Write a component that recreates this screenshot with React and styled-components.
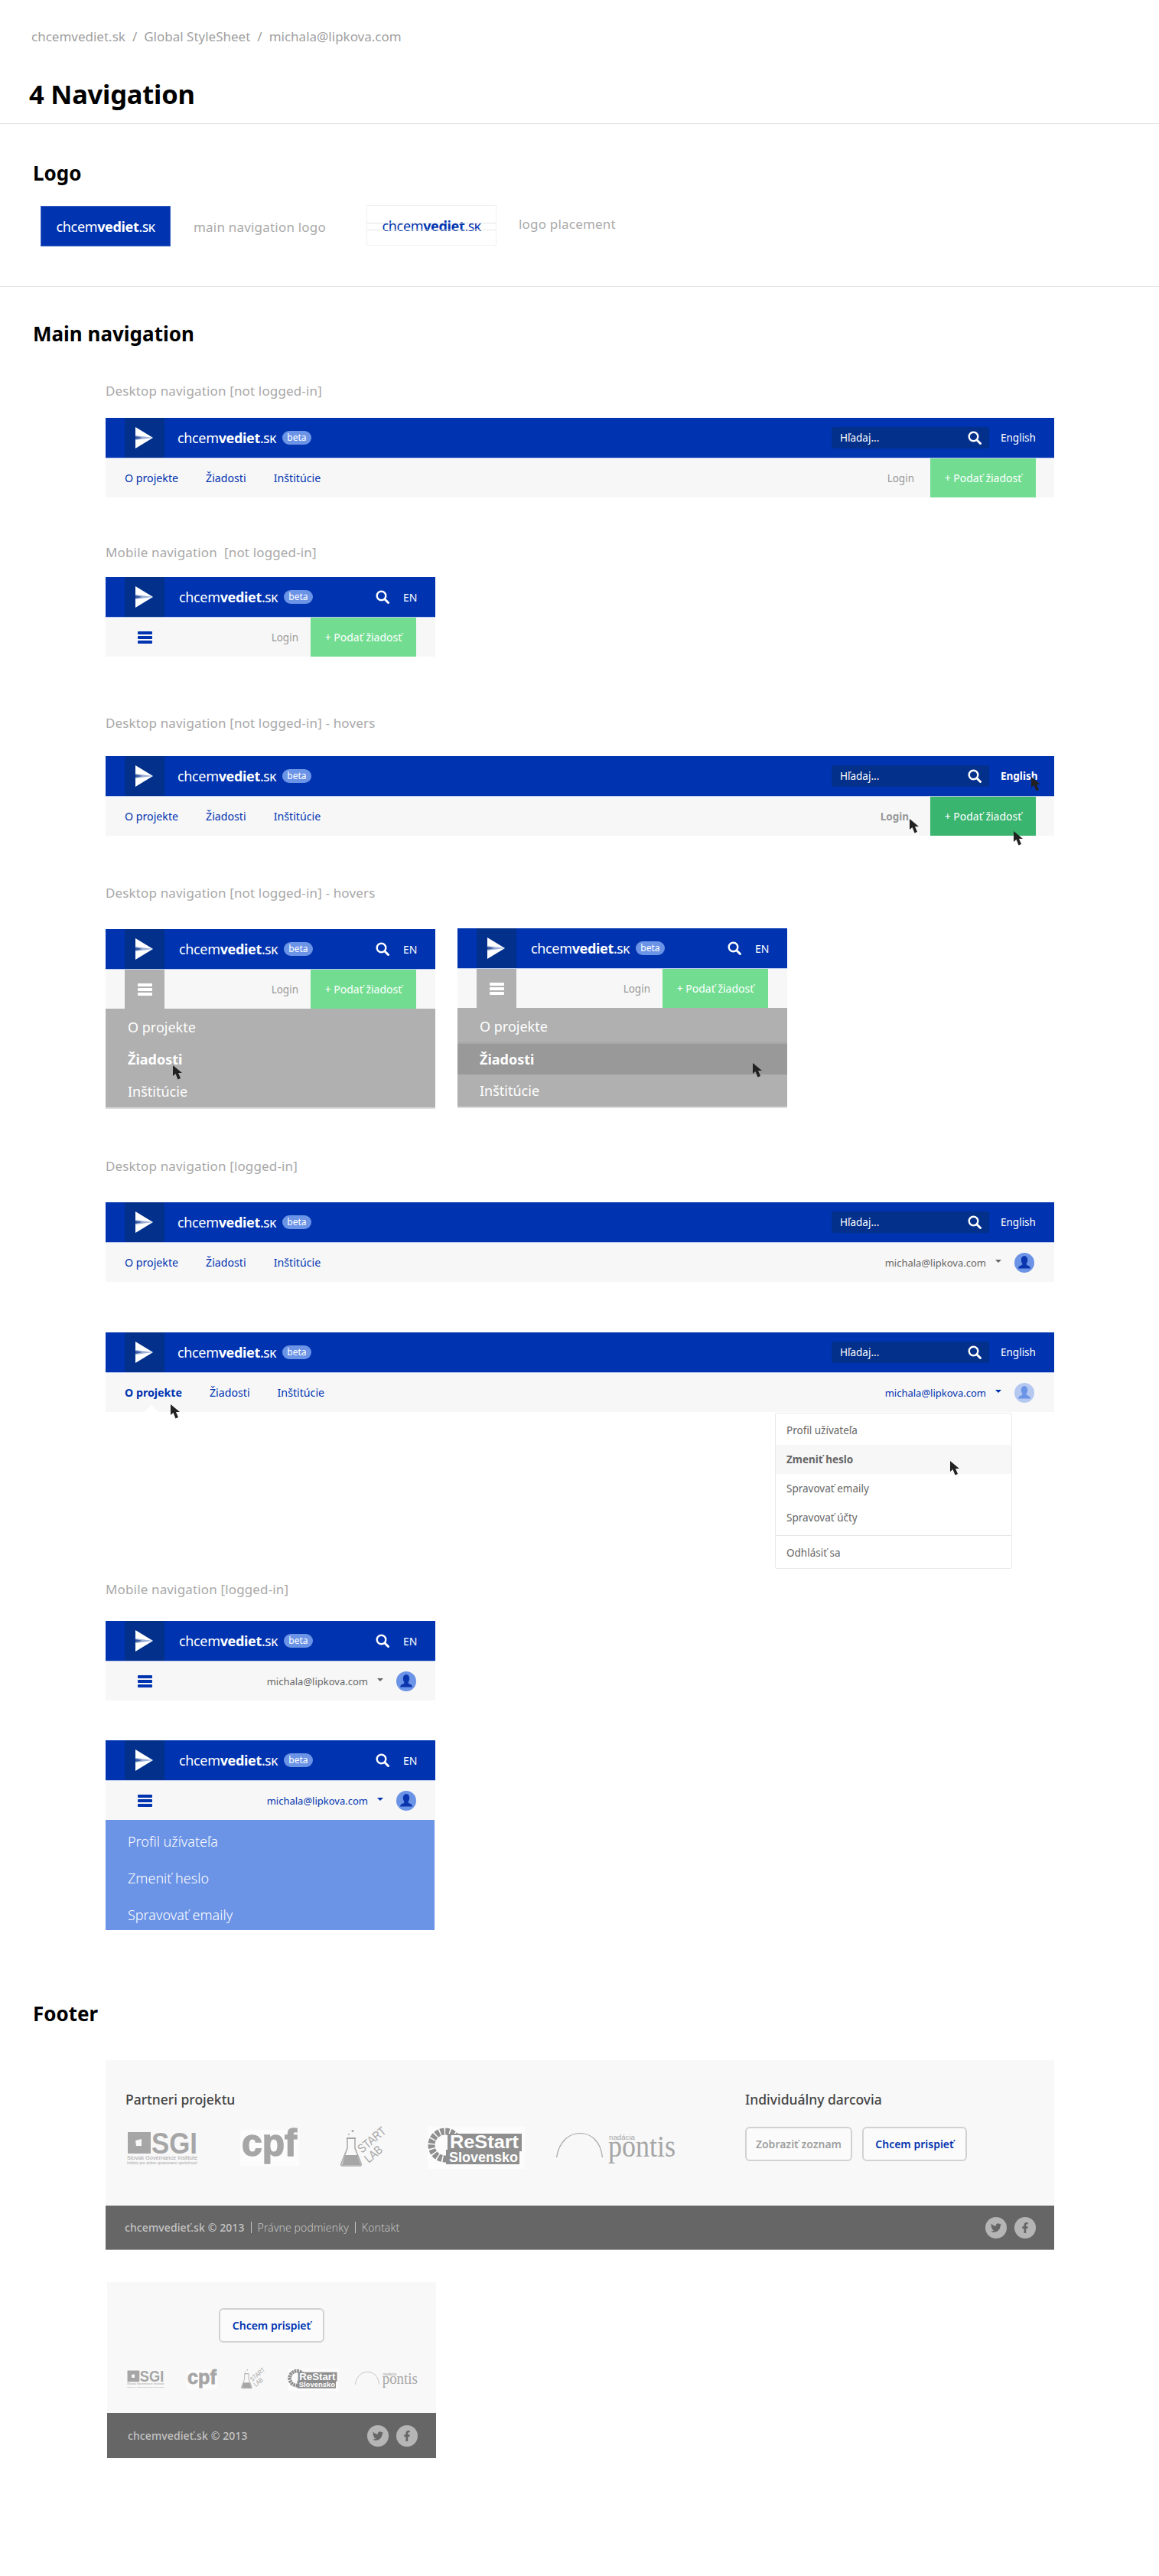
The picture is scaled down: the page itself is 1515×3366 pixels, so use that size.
import React from 'react';
import styled, { createGlobalStyle } from 'styled-components';
import { FaTwitter, FaFacebookF } from 'react-icons/fa';

const BLUE = '#0033b0';
const DARK_BLUE = '#03308a';
const SOFT_BLUE = '#6b93e6';
const GREEN = '#72dd91';
const LOGO_GREY = '#a6a6a6';
const FONT = '"Noto Sans", "Open Sans", sans-serif';

const GlobalStyle = createGlobalStyle`
    html, body {
        margin: 0;
        background: #fff;
    }
    body {
        font-family: ${FONT};
    }
`;

const Page = styled.div`
    min-height: 3366px;
    width: 1515px;
    overflow: hidden;
`;

const PageHead = styled.header`
    height: 162px;
    box-sizing: border-box;
    border-bottom: 1px solid #e2e2e2;
    padding: 36px 0 0 41px;
`;

const Crumbs = styled.div`
    display: flex;
    gap: 9px;
    font-size: 17px;
    line-height: 24px;
    color: #a0a0a0;
`;

const Title = styled.h1`
    margin: 41px 0 0 -3px;
    font-size: 34.5px;
    line-height: 44px;
    font-weight: 700;
    color: #000;
    letter-spacing: -0.2px;
`;

const LogoSection = styled.section`
    height: 213px;
    box-sizing: border-box;
    border-bottom: 1px solid #e2e2e2;
    padding: 47px 0 0 43px;
`;

const SectionTitle = styled.h2`
    margin: ${p => p.$mt || 0}px 0 0 ${p => p.$ml || 0}px;
    font-size: 26px;
    line-height: 34px;
    font-weight: 700;
    color: #000;
`;

const LogoRow = styled.div`
    display: flex;
    margin: 26px 0 0 10px;
`;

const LogoBox = styled.div`
    width: 170px;
    height: 53px;
    flex: none;
    box-sizing: border-box;
    display: flex;
    align-items: center;
    justify-content: center;
    position: relative;
    margin-top: ${p => (p.$outlined ? -1 : 0)}px;
    background: ${p => (p.$outlined ? '#fff' : BLUE)};
    color: ${p => (p.$outlined ? BLUE : '#fff')};
    border: 1px solid ${p => (p.$outlined ? '#f1f1f1' : '#3a62c4')};
`;

const GuideLines = styled.span`
    position: absolute;
    left: 0;
    right: 0;
    top: 22px;
    height: 8px;
    border-top: 1px solid #e4e4e4;
    border-bottom: 1px solid #e4e4e4;
`;

const LogoCaption = styled.span`
    font-size: 17px;
    line-height: 24px;
    color: #aaa;
    letter-spacing: 0.2px;
    margin: ${p => p.$mt}px 0 0 ${p => p.$ml}px;
    width: ${p => p.$w}px;
    flex: none;
`;

const Content = styled.main`
    padding-left: 138px;
`;

const OuterTitle = styled(SectionTitle)`
    margin-left: 43px;
`;

const Label = styled.div`
    margin-top: ${p => p.$mt}px;
    font-size: 17px;
    line-height: 24px;
    color: #a8a8a8;
    letter-spacing: 0.15px;
    white-space: pre;
`;

const NavFrame = styled.div`
    position: relative;
    width: ${p => (p.$mobile ? 431 : 1240)}px;
    margin-top: ${p => p.$mt || 0}px;
    flex: none;
`;

const TopBar = styled.div`
    height: 53px;
    box-sizing: border-box;
    background: ${BLUE};
    border-bottom: 1px solid #b9c8ee;
    display: flex;
    align-items: center;
    padding: 0 24px 0 25px;
    color: #fff;
`;

const LogoCell = styled.div`
    width: 52px;
    height: 52px;
    flex: none;
    background: ${DARK_BLUE};
    display: flex;
    align-items: center;
    justify-content: center;
`;

const Brand = styled.div`
    font-size: 18px;
    line-height: 24px;
    letter-spacing: -0.35px;
    white-space: nowrap;
    color: inherit;
    margin-left: ${p => p.$ml || 0}px;
    b {
        font-weight: 700;
    }
    span {
        font-variant: small-caps;
    }
`;

const Beta = styled.span`
    margin-left: 8px;
    width: 38px;
    height: 18px;
    flex: none;
    border-radius: 9px;
    background: ${SOFT_BLUE};
    color: #fff;
    font-size: 12px;
    line-height: 18px;
    text-align: center;
`;

const SearchBox = styled.div`
    margin-left: auto;
    width: 206px;
    height: 28px;
    box-sizing: border-box;
    background: ${DARK_BLUE};
    border-radius: 3px;
    padding: 0 10px 0 11px;
    display: flex;
    align-items: center;
    justify-content: space-between;
    font-size: 13.5px;
`;

const Lang = styled.span`
    margin-left: ${p => p.$ml}px;
    font-size: ${p => (p.$mobile ? 14 : 13.5)}px;
    font-weight: ${p => (p.$hover ? 700 : 400)};
    width: ${p => (p.$mobile ? 18 : 46)}px;
    white-space: nowrap;
`;

const MobileSearch = styled.span`
    margin-left: auto;
    display: flex;
`;

const SubBar = styled.div`
    height: 51px;
    background: #f7f7f7;
    display: flex;
    align-items: center;
    padding: 0 ${p => p.$pr || 24}px 0 25px;
`;

const MainLinks = styled.nav`
    display: flex;
    gap: 36px;
    margin-right: auto;
`;

const MainLink = styled.span`
    font-size: 14.2px;
    color: ${BLUE};
    font-weight: ${p => (p.$active ? 700 : 400)};
`;

const Notch = styled.span`
    position: absolute;
    left: 51px;
    bottom: 0;
    width: 0;
    height: 0;
    border-left: 9px solid transparent;
    border-right: 9px solid transparent;
    border-bottom: 9px solid #fff;
`;

const MenuCell = styled.div`
    width: 52px;
    align-self: stretch;
    flex: none;
    margin-right: auto;
    background: ${p => (p.$open ? '#b0b0b0' : 'transparent')};
    display: flex;
    align-items: center;
    justify-content: center;
`;

const Login = styled.span`
    font-size: 13.5px;
    color: #999;
    font-weight: ${p => (p.$hover ? 700 : 400)};
    margin-right: ${p => (p.$hover ? 28 : p.$mobile ? 16 : 21)}px;
`;

const SubmitButton = styled.span`
    width: 138px;
    align-self: stretch;
    flex: none;
    display: flex;
    align-items: center;
    justify-content: center;
    background: ${p => (p.$hover ? '#3ab56f' : GREEN)};
    color: #fff;
    font-size: 14px;
`;

const UserName = styled.span`
    font-size: 13px;
    color: ${p => (p.$hover ? BLUE : '#666')};
`;

const Caret = styled.span`
    width: 0;
    height: 0;
    margin: 0 17px 3px 12px;
    border-left: 4px solid transparent;
    border-right: 4px solid transparent;
    border-top: 4px solid ${p => (p.$hover ? BLUE : '#666')};
`;

const Avatar = styled.span`
    width: 26px;
    height: 26px;
    flex: none;
    border-radius: 50%;
    overflow: hidden;
    background: ${p => (p.$faded ? '#b4c8f0' : SOFT_BLUE)};
    color: ${p => (p.$faded ? SOFT_BLUE : '#0a35ae')};
    display: flex;
    align-items: center;
    justify-content: center;
`;

const GreyMenu = styled.div`
    background: #b0b0b0;
    border-bottom: 2px solid #ddd;
    padding-top: 3px;
`;

const GreyRow = styled.div`
    height: 42px;
    box-sizing: border-box;
    padding-left: 29px;
    display: flex;
    align-items: center;
    color: #fff;
    font-size: 18px;
    font-weight: ${p => (p.$bold ? 700 : 400)};
    background: ${p => (p.$hover ? '#999' : 'transparent')};
    border-top: ${p => (p.$hover ? '2px solid #a6a6a6' : 0)};
`;

const BlueMenu = styled.div`
    width: 430px;
    height: 144px;
    box-sizing: border-box;
    overflow: hidden;
    background: ${SOFT_BLUE};
    padding-top: 4px;
`;

const BlueRow = styled.div`
    height: 48px;
    padding-left: 29px;
    display: flex;
    align-items: center;
    color: #fff;
    font-size: 18px;
    font-weight: 300;
`;

const HoverPair = styled.div`
    display: flex;
    gap: 29px;
    margin-top: 35px;
`;

const Dropdown = styled.div`
    position: absolute;
    left: 875px;
    top: 105px;
    width: 310px;
    height: 204px;
    box-sizing: border-box;
    background: #fff;
    border: 1px solid #e9e9e9;
    border-radius: 3px;
    padding-top: 3px;
    z-index: 2;
`;

const DropdownItem = styled.div`
    height: 38px;
    padding-left: 14px;
    display: flex;
    align-items: center;
    font-size: 13.5px;
    color: #666;
    font-weight: ${p => (p.$hover ? 700 : 400)};
    background: ${p => (p.$hover ? '#f7f7f7' : 'transparent')};
`;

const DropdownRule = styled.div`
    height: 1px;
    background: #e4e4e4;
    margin: 4px 0 3px;
`;

const CursorMark = styled.svg`
    position: absolute;
    left: ${p => p.$x}px;
    top: ${p => p.$y}px;
    z-index: 3;
`;

const FooterPanel = styled.footer`
    margin-left: ${p => (p.$mobile ? 2 : 0)}px;
    margin-top: ${p => p.$mt}px;
    width: ${p => (p.$mobile ? 430 : 1240)}px;
`;

const FooterTop = styled.div`
    background: #f8f8f8;
    height: ${p => (p.$mobile ? 171 : 190)}px;
    box-sizing: border-box;
    display: flex;
    flex-direction: ${p => (p.$mobile ? 'column' : 'row')};
    padding: ${p => (p.$mobile ? '34px 0 0 26px' : '39px 0 0 26px')};
`;

const PartnersCol = styled.div`
    width: 810px;
    flex: none;
`;

const FooterHeading = styled.h3`
    margin: 0 0 24px;
    font-size: 17.5px;
    line-height: 24px;
    font-weight: 500;
    color: #444;
`;

const Logos = styled.div`
    display: flex;
    align-items: center;
    margin-left: 2px;
    height: 55px;
    ${p => p.$small && 'height: 30px; margin: 33px 0 0 0;'}
`;

const LogoSlot = styled.span`
    display: flex;
    flex: none;
    margin-right: ${p => p.$gap}px;
`;

const LogoSvg = styled.svg`
    overflow: visible;
`;

const LogoText = styled.text`
    font-family: ${p => (p.$serif ? '"Liberation Serif"' : '"Liberation Sans"')}, sans-serif;
    font-weight: ${p => (p.$bold ? 700 : 400)};
    fill: ${p => p.$fill || LOGO_GREY};
`;

const Buttons = styled.div`
    display: flex;
    gap: 13px;
    margin-top: 2px;
`;

const OutlineButton = styled.span`
    height: 45px;
    width: ${p => p.$w}px;
    box-sizing: border-box;
    border: 2px solid #d2d2d2;
    border-radius: 6px;
    background: #fbfbfb;
    display: flex;
    align-items: center;
    justify-content: center;
    font-size: 14px;
    font-weight: 600;
    color: ${p => (p.$muted ? '#a0a0a0' : BLUE)};
    ${p => p.$center && 'margin-left: 120px;'}
`;

const FooterBottom = styled.div`
    height: ${p => (p.$mobile ? 59 : 58)}px;
    box-sizing: border-box;
    background: #666;
    border-bottom: ${p => (p.$mobile ? 0 : '1px solid #999')};
    display: flex;
    align-items: center;
    justify-content: space-between;
    padding: 0 24px 0 ${p => (p.$mobile ? 27 : 25)}px;
    font-size: 14px;
    letter-spacing: 0.1px;
    color: #c4c4c4;
`;

const Legal = styled.div`
    display: flex;
    align-items: center;
    gap: 8px;
    b {
        font-weight: 500;
    }
    i {
        width: 1px;
        height: 15px;
        background: #c4c4c4;
    }
    span {
        font-weight: 300;
    }
`;

const Socials = styled.div`
    display: flex;
    gap: 10px;
`;

const SocialDot = styled.span`
    width: 28px;
    height: 28px;
    border-radius: 50%;
    background: #b5b5b5;
    color: #666;
    display: flex;
    align-items: center;
    justify-content: center;
    font-size: 14px;
`;

function ArrowMark() {
    return (
        <svg width="24" height="28" viewBox="0 0 24 28">
            <polygon points="0,0 23,14 0,28" fill="#fff" />
            <polygon points="0,11 23,14 0,17 2,14" fill="#9db0d8" />
            <polygon points="0,12 9,14 0,16" fill="#35589f" />
        </svg>
    );
}

function SearchIcon() {
    return (
        <svg width="18" height="18" viewBox="0 0 18 18" fill="none" stroke="#fff">
            <circle cx="7.5" cy="7.5" r="5.8" strokeWidth="2.4" />
            <line x1="12" y1="12" x2="16.5" y2="16.5" strokeWidth="3" strokeLinecap="round" />
        </svg>
    );
}

function BarsIcon({ color }) {
    return (
        <svg width="19" height="16" viewBox="0 0 19 16" fill={color}>
            <rect y="0" width="19" height="4" rx="1" />
            <rect y="6" width="19" height="4" rx="1" />
            <rect y="12" width="19" height="4" rx="1" />
        </svg>
    );
}

function PersonIcon() {
    return (
        <svg width="18" height="20" viewBox="0 0 18 20" fill="currentColor">
            <ellipse cx="9" cy="6.5" rx="4.2" ry="5.5" />
            <path d="M6.5 11 L11.5 11 L12 13 C15 14 17 15 17 17.5 L1 17.5 C1 15 3 14 6 13 Z" />
        </svg>
    );
}

function Cursor({ x, y }) {
    return (
        <CursorMark $x={x} $y={y} width="14" height="19" viewBox="0 0 14 19">
            <path d="M1 0 L1 14 L4.5 11 L7.5 18.5 L11 17 L8 10 L13 10 Z" fill="#222" />
        </CursorMark>
    );
}

function BrandName({ ml }) {
    return (
        <Brand $ml={ml}>
            chcem<b>vediet</b>
            <span>.sk</span>
        </Brand>
    );
}

function DesktopTop({ hover }) {
    return (
        <TopBar>
            <LogoCell>
                <ArrowMark />
            </LogoCell>
            <BrandName ml={17} />
            <Beta>beta</Beta>
            <SearchBox>
                Hľadaj...
                <SearchIcon />
            </SearchBox>
            <Lang $ml={15} $hover={hover}>
                English
            </Lang>
        </TopBar>
    );
}

function MobileTop() {
    return (
        <TopBar>
            <LogoCell>
                <ArrowMark />
            </LogoCell>
            <BrandName ml={19} />
            <Beta>beta</Beta>
            <MobileSearch>
                <SearchIcon />
            </MobileSearch>
            <Lang $ml={18} $mobile>
                EN
            </Lang>
        </TopBar>
    );
}

function DesktopLinks({ active }) {
    return (
        <MainLinks>
            <MainLink $active={active}>O projekte</MainLink>
            <MainLink>Žiadosti</MainLink>
            <MainLink>Inštitúcie</MainLink>
        </MainLinks>
    );
}

function GuestMobileBar({ open }) {
    return (
        <SubBar $pr={25}>
            <MenuCell $open={open}>
                <BarsIcon color={open ? '#fff' : BLUE} />
            </MenuCell>
            <Login $mobile>Login</Login>
            <SubmitButton>+ Podať žiadosť</SubmitButton>
        </SubBar>
    );
}

function UserMobileBar({ hover }) {
    return (
        <SubBar $pr={25}>
            <MenuCell>
                <BarsIcon color={BLUE} />
            </MenuCell>
            <UserName $hover={hover}>michala@lipkova.com</UserName>
            <Caret $hover={hover} />
            <Avatar>
                <PersonIcon />
            </Avatar>
        </SubBar>
    );
}

function SgiLogo({ k }) {
    return (
        <LogoSvg width={92 * k} height={44 * k} viewBox="0 0 92 44">
            <rect x="1" y="1" width="30" height="28" fill={LOGO_GREY} />
            <polygon points="11,12 19,10 19,19 12,19" fill="#f8f8f8" />
            <LogoText x="32" y="29" $bold fontSize="38" textLength="60" lengthAdjust="spacingAndGlyphs">
                SGI
            </LogoText>
            <LogoText x="0" y="37" fontSize="7" textLength="92" lengthAdjust="spacingAndGlyphs">
                Slovak Governance Institute
            </LogoText>
            <LogoText x="0" y="43" fontSize="4.5" textLength="92" lengthAdjust="spacingAndGlyphs">
                Inštitút pre dobre spravovanú spoločnosť
            </LogoText>
        </LogoSvg>
    );
}

function CpfLogo({ k }) {
    return (
        <LogoSvg width={77 * k} height={47 * k} viewBox="0 0 77 47">
            <rect width="77" height="47" fill="#fcfcfc" />
            <LogoText x="2" y="34" $bold fontSize="50" stroke={LOGO_GREY} strokeWidth="1.5" textLength="72" lengthAdjust="spacingAndGlyphs">
                cpf
            </LogoText>
        </LogoSvg>
    );
}

function StartLabLogo({ k }) {
    return (
        <LogoSvg width={63 * k} height={48 * k} viewBox="0 0 63 48">
            <path d="M9 12 L9 24 L1 44 Q0 47 3 47 L25 47 Q28 47 27 44 L19 24 L19 12" fill="none" stroke={LOGO_GREY} strokeWidth="1.5" />
            <path d="M6 33 L22 33 L26.5 46 L2 46 Z" fill={LOGO_GREY} />
            <rect x="8" y="10" width="12" height="2" fill={LOGO_GREY} />
            <circle cx="16" cy="1.5" r="1.5" fill={LOGO_GREY} />
            <circle cx="11" cy="6" r="1" fill={LOGO_GREY} />
            <LogoText transform="translate(28 31) rotate(-40)" fontSize="16" textLength="43" lengthAdjust="spacingAndGlyphs">
                START
            </LogoText>
            <LogoText transform="translate(37 44) rotate(-40)" fontSize="16" textLength="25" lengthAdjust="spacingAndGlyphs">
                LAB
            </LogoText>
        </LogoSvg>
    );
}

function RestartLogo({ k }) {
    return (
        <LogoSvg width={127 * k} height={55 * k} viewBox="0 0 127 55">
            <rect width="127" height="55" fill="#fcfcfc" />
            <circle cx="23" cy="24" r="18" fill="none" stroke="#8f8f8f" strokeWidth="9" strokeDasharray="5 1.5" />
            <rect x="26" y="9" width="97" height="23" fill="#8f8f8f" />
            <rect x="24" y="30" width="96" height="19" fill="#8f8f8f" />
            <LogoText x="29" y="28" $bold $fill="#fff" fontSize="24" textLength="90" lengthAdjust="spacingAndGlyphs">
                ReStart
            </LogoText>
            <LogoText x="28" y="46" $bold $fill="#fff" fontSize="19" textLength="90" lengthAdjust="spacingAndGlyphs">
                Slovensko
            </LogoText>
        </LogoSvg>
    );
}

function PontisLogo({ k }) {
    return (
        <LogoSvg width={156 * k} height={40 * k} viewBox="0 0 156 40">
            <path d="M0.5 32 C4 10 18 0.5 31 0.5 C45 0.5 58 10 60.5 32" fill="none" stroke={LOGO_GREY} strokeWidth="1.2" />
            <LogoText x="69" y="9" fontSize="9.5" textLength="34" lengthAdjust="spacingAndGlyphs">
                nadácia
            </LogoText>
            <LogoText x="68" y="31" $serif fontSize="40" textLength="88" lengthAdjust="spacingAndGlyphs">
                pontis
            </LogoText>
        </LogoSvg>
    );
}

function PartnerLogos({ small }) {
    const k = small ? 0.525 : 1;
    const gaps = small ? [30, 30, 28, 22, 0] : [56, 54, 51, 41, 0];
    return (
        <Logos $small={small}>
            <LogoSlot $gap={gaps[0]}>
                <SgiLogo k={k} />
            </LogoSlot>
            <LogoSlot $gap={gaps[1]}>
                <CpfLogo k={k} />
            </LogoSlot>
            <LogoSlot $gap={gaps[2]}>
                <StartLabLogo k={k} />
            </LogoSlot>
            <LogoSlot $gap={gaps[3]}>
                <RestartLogo k={k} />
            </LogoSlot>
            <LogoSlot $gap={gaps[4]}>
                <PontisLogo k={k} />
            </LogoSlot>
        </Logos>
    );
}

function SocialLinks() {
    return (
        <Socials>
            <SocialDot>
                <FaTwitter />
            </SocialDot>
            <SocialDot>
                <FaFacebookF />
            </SocialDot>
        </Socials>
    );
}

export default function App() {
    return (
        <Page>
            <GlobalStyle />
            <PageHead>
                <Crumbs>
                    <span>chcemvediet.sk</span>
                    <span>/</span>
                    <span>Global StyleSheet</span>
                    <span>/</span>
                    <span>michala@lipkova.com</span>
                </Crumbs>
                <Title>4 Navigation</Title>
            </PageHead>

            <LogoSection>
                <SectionTitle>Logo</SectionTitle>
                <LogoRow>
                    <LogoBox>
                        <BrandName />
                    </LogoBox>
                    <LogoCaption $ml={30} $mt={16} $w={226}>
                        main navigation logo
                    </LogoCaption>
                    <LogoBox $outlined>
                        <GuideLines />
                        <BrandName />
                    </LogoBox>
                    <LogoCaption $ml={29} $mt={12} $w={160}>
                        logo placement
                    </LogoCaption>
                </LogoRow>
            </LogoSection>

            <OuterTitle $mt={44}>Main navigation</OuterTitle>

            <Content>
                <Label $mt={46}>Desktop navigation [not logged-in]</Label>
                <NavFrame $mt={23}>
                    <DesktopTop />
                    <SubBar>
                        <DesktopLinks />
                        <Login>Login</Login>
                        <SubmitButton>+ Podať žiadosť</SubmitButton>
                    </SubBar>
                </NavFrame>

                <Label $mt={60}>Mobile navigation  [not logged-in]</Label>
                <NavFrame $mobile $mt={20}>
                    <MobileTop />
                    <GuestMobileBar />
                </NavFrame>

                <Label $mt={75}>Desktop navigation [not logged-in] - hovers</Label>
                <NavFrame $mt={31}>
                    <DesktopTop hover />
                    <SubBar>
                        <DesktopLinks />
                        <Login $hover>Login</Login>
                        <SubmitButton $hover>+ Podať žiadosť</SubmitButton>
                    </SubBar>
                    <Cursor x={1209} y={27} />
                    <Cursor x={1050} y={82} />
                    <Cursor x={1186} y={98} />
                </NavFrame>

                <Label $mt={63}>Desktop navigation [not logged-in] - hovers</Label>
                <HoverPair>
                    <NavFrame $mobile>
                        <MobileTop />
                        <GuestMobileBar open />
                        <GreyMenu>
                            <GreyRow>O projekte</GreyRow>
                            <GreyRow $bold>Žiadosti</GreyRow>
                            <GreyRow>Inštitúcie</GreyRow>
                        </GreyMenu>
                        <Cursor x={87} y={178} />
                    </NavFrame>
                    <NavFrame $mobile $mt={-1}>
                        <MobileTop />
                        <GuestMobileBar open />
                        <GreyMenu>
                            <GreyRow>O projekte</GreyRow>
                            <GreyRow $bold $hover>
                                Žiadosti
                            </GreyRow>
                            <GreyRow>Inštitúcie</GreyRow>
                        </GreyMenu>
                        <Cursor x={385} y={176} />
                    </NavFrame>
                </HoverPair>

                <Label $mt={63}>Desktop navigation [logged-in]</Label>
                <NavFrame $mt={35}>
                    <DesktopTop />
                    <SubBar $pr={26}>
                        <DesktopLinks />
                        <UserName>michala@lipkova.com</UserName>
                        <Caret />
                        <Avatar>
                            <PersonIcon />
                        </Avatar>
                    </SubBar>
                </NavFrame>

                <NavFrame $mt={66}>
                    <DesktopTop />
                    <SubBar $pr={26}>
                        <DesktopLinks active />
                        <UserName $hover>michala@lipkova.com</UserName>
                        <Caret $hover />
                        <Avatar $faded>
                            <PersonIcon />
                        </Avatar>
                    </SubBar>
                    <Notch />
                    <Cursor x={84} y={94} />
                    <Dropdown>
                        <DropdownItem>Profil užívateľa</DropdownItem>
                        <DropdownItem $hover>Zmeniť heslo</DropdownItem>
                        <DropdownItem>Spravovať emaily</DropdownItem>
                        <DropdownItem>Spravovať účty</DropdownItem>
                        <DropdownRule />
                        <DropdownItem>Odhlásiť sa</DropdownItem>
                    </Dropdown>
                    <Cursor x={1103} y={168} />
                </NavFrame>

                <Label $mt={220}>Mobile navigation [logged-in]</Label>
                <NavFrame $mobile $mt={29}>
                    <MobileTop />
                    <UserMobileBar />
                </NavFrame>

                <NavFrame $mobile $mt={52}>
                    <MobileTop />
                    <UserMobileBar hover />
                    <BlueMenu>
                        <BlueRow>Profil užívateľa</BlueRow>
                        <BlueRow>Zmeniť heslo</BlueRow>
                        <BlueRow>Spravovať emaily</BlueRow>
                    </BlueMenu>
                </NavFrame>
            </Content>

            <OuterTitle $mt={92}>Footer</OuterTitle>

            <Content>
                <FooterPanel $mt={44}>
                    <FooterTop>
                        <PartnersCol>
                            <FooterHeading>Partneri projektu</FooterHeading>
                            <PartnerLogos />
                        </PartnersCol>
                        <div>
                            <FooterHeading>Individuálny darcovia</FooterHeading>
                            <Buttons>
                                <OutlineButton $muted $w={140}>
                                    Zobraziť zoznam
                                </OutlineButton>
                                <OutlineButton $w={137}>Chcem prispieť</OutlineButton>
                            </Buttons>
                        </div>
                    </FooterTop>
                    <FooterBottom>
                        <Legal>
                            <b>chcemvedieť.sk © 2013</b>
                            <i />
                            <span>Právne podmienky</span>
                            <i />
                            <span>Kontakt</span>
                        </Legal>
                        <SocialLinks />
                    </FooterBottom>
                </FooterPanel>

                <FooterPanel $mobile $mt={42}>
                    <FooterTop $mobile>
                        <OutlineButton $w={138} $center>
                            Chcem prispieť
                        </OutlineButton>
                        <PartnerLogos small />
                    </FooterTop>
                    <FooterBottom $mobile>
                        <Legal>
                            <b>chcemvedieť.sk © 2013</b>
                        </Legal>
                        <SocialLinks />
                    </FooterBottom>
                </FooterPanel>
            </Content>
        </Page>
    );
}
